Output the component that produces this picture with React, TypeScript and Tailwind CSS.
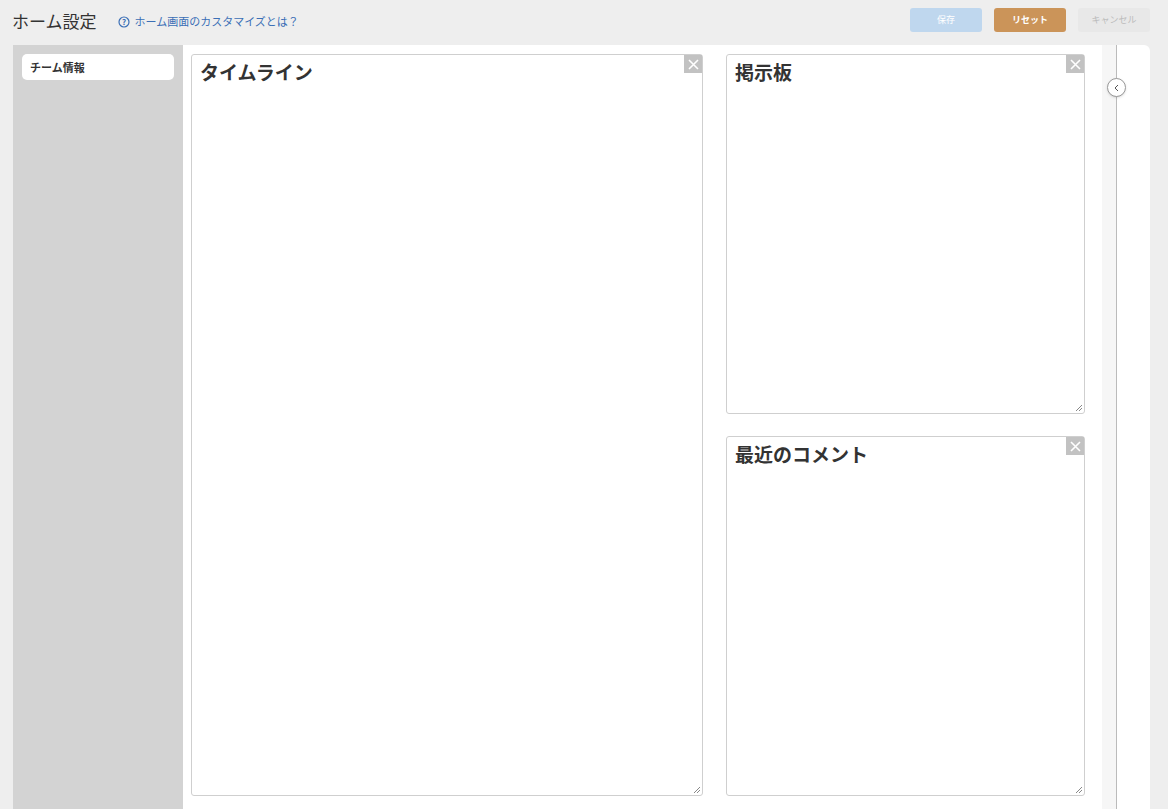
export default function App() {
  const font = { fontFamily: '"Noto Sans CJK JP", "Noto Sans", sans-serif' };
  const Panel = ({ title, className }: { title: string; className: string }) => (
    <div className={`relative bg-white border border-[#cfcfcf] rounded-[3px] ${className}`}>
      <div className="pl-[8px] pt-[3px] text-[19px] font-bold text-[#333]">{title}</div>
      <div className="absolute top-0 right-0 w-[18px] h-[18px] bg-[#c2c2c2] flex items-center justify-center">
        <svg width="11" height="11" viewBox="0 0 11 11"><path d="M1 1L10 10M10 1L1 10" stroke="#fff" strokeWidth="1.6" /></svg>
      </div>
      <svg className="absolute bottom-[1px] right-[1px]" width="8" height="8" viewBox="0 0 8 8"><path d="M7 1L1 7M7 4L4 7" stroke="#888" strokeWidth="1" /></svg>
    </div>
  );
  return (
    <div className="w-[1168px] h-[809px] bg-[#eeeeee] overflow-hidden flex flex-col" style={font}>
      <div className="h-[45px] flex items-center pl-[12px] pr-[18px]">
        <div className="text-[17px] text-[#333] -mt-[4px]">ホーム設定</div>
        <div className="ml-[21px] flex items-center text-[11px] text-[#3b6fb6] -mt-[2px]">
          <svg width="12" height="12" viewBox="0 0 12 12" className="mr-[5px]"><circle cx="6" cy="6" r="5" fill="none" stroke="#3b6fb6" strokeWidth="1.2" /><text x="6" y="8.8" textAnchor="middle" fontSize="8" fill="#3b6fb6" fontWeight="bold">?</text></svg>
          ホーム画面のカスタマイズとは？
        </div>
        <div className="ml-auto flex gap-[12px] -mt-[6px]">
          <div className="w-[72px] h-[24px] rounded-[3px] bg-[#bfd7ee] text-white text-[9px] flex items-center justify-center">保存</div>
          <div className="w-[72px] h-[24px] rounded-[3px] bg-[#cb9459] text-white text-[9px] font-bold flex items-center justify-center">リセット</div>
          <div className="w-[72px] h-[24px] rounded-[3px] bg-[#e8e8e8] text-[#bbb] text-[9px] flex items-center justify-center">キャンセル</div>
        </div>
      </div>
      <div className="flex flex-1 ml-[13px] mr-[18px] bg-white rounded-tr-[6px] overflow-hidden">
        <div className="w-[170px] bg-[#d3d3d3] pt-[9px] px-[9px]">
          <div className="h-[26px] bg-white rounded-[5px] pl-[8px] flex items-center text-[11px] font-bold text-[#333]">チーム情報</div>
        </div>
        <div className="w-[919px] flex gap-[23px] pl-[8px] pt-[9px]">
          <Panel title="タイムライン" className="w-[512px] h-[742px]" />
          <div className="flex flex-col gap-[22px]">
            <Panel title="掲示板" className="w-[359px] h-[360px]" />
            <Panel title="最近のコメント" className="w-[359px] h-[360px]" />
          </div>
        </div>
        <div className="w-[15px] bg-[#f6f6f6] border-r border-[#bbb]" />
        <div className="flex-1 relative">
          <div className="absolute left-[-10px] top-[33px] w-[19px] h-[19px] rounded-full bg-white border border-[#999] shadow flex items-center justify-center">
            <svg width="8" height="8" viewBox="0 0 8 8"><path d="M5 1L2 4L5 7" fill="none" stroke="#555" strokeWidth="1" /></svg>
          </div>
        </div>
      </div>
    </div>
  );
}
